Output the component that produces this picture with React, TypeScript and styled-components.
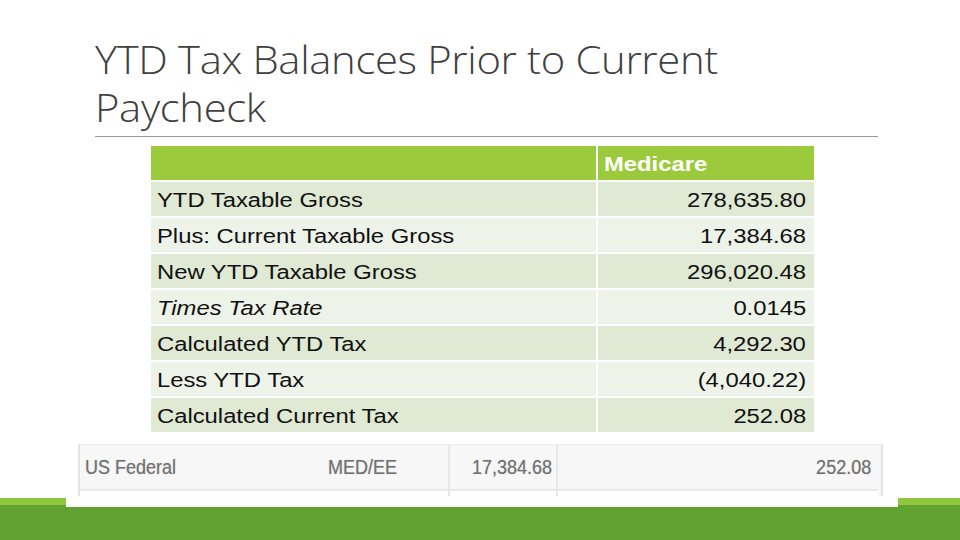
import React from "react";
import styled, { createGlobalStyle } from "styled-components";

const Global = createGlobalStyle`
  html, body { margin: 0; padding: 0; background: #ffffff; }
  #root { width: 960px; height: 540px; overflow: hidden; }
`;

const Slide = styled.div`
  width: 960px;
  height: 540px;
  display: flex;
  flex-direction: column;
  background: #ffffff;
  overflow: hidden;
`;

const Title = styled.h1`
  margin: 35px 0 0 95px;
  font-family: "Open Sans", "Liberation Sans", sans-serif;
  font-weight: 300;
  font-size: 38px;
  line-height: 48px;
  color: #404040;
  letter-spacing: -0.3px;
  transform: scaleX(1.1);
  transform-origin: left top;
`;

const Rule = styled.hr`
  margin: 5px 82px 0 95px;
  border: none;
  height: 1px;
  background: #9a9a9a;
`;

const Table = styled.div`
  margin: 9px 0 0 151px;
  width: 663px;
  display: grid;
  grid-template-columns: 445px 216px;
  grid-auto-rows: 34px;
  column-gap: 2px;
  row-gap: 2px;
`;

const Cell = styled.div<{ $tone: "head" | "dark" | "light"; $align?: "left" | "right" }>`
  background: ${(p) => (p.$tone === "head" ? "#9bcb3c" : p.$tone === "dark" ? "#dfe9d4" : "#eef3e9")};
  display: flex;
  align-items: center;
  justify-content: ${(p) => (p.$align === "right" ? "flex-end" : "flex-start")};
  padding: ${(p) => (p.$align === "right" ? "3px 8px 0 0" : "3px 0 0 6px")};
  box-sizing: border-box;
  font-family: "Liberation Sans", Arial, sans-serif;
  font-size: 20px;
  color: #111111;
  white-space: nowrap;
`;

const Txt = styled.span<{ $align?: "left" | "right"; $italic?: boolean; $bold?: boolean; $white?: boolean }>`
  display: inline-block;
  transform: scaleX(1.19);
  transform-origin: ${(p) => (p.$align === "right" ? "right" : "left")} center;
  font-style: ${(p) => (p.$italic ? "italic" : "normal")};
  font-weight: ${(p) => (p.$bold ? 700 : 400)};
  color: ${(p) => (p.$white ? "#ffffff" : "inherit")};
`;

const Shot = styled.div`
  position: relative;
  z-index: 1;
  margin: 5px 62px -33px 66px;
  height: 70px;
  background: #ffffff;
  padding: 7px 0 0 12px;
  box-sizing: border-box;
`;

const ShotGrid = styled.div`
  width: 801px;
  display: grid;
  grid-template-columns: 232px 136px 108px 321px;
  grid-template-rows: 46px 5px;
  border-left: 2px solid #e3e3e3;
  border-right: 2px solid #e3e3e3;
  border-top: 1px solid #ececec;
  background: #f7f7f7;
`;

const ShotCell = styled.div<{ $align?: "left" | "right"; $divider?: boolean; $pad?: number }>`
  display: flex;
  align-items: center;
  justify-content: ${(p) => (p.$align === "right" ? "flex-end" : "flex-start")};
  padding: ${(p) => (p.$align === "right" ? `0 ${p.$pad ?? 5}px 0 0` : `0 0 0 ${p.$pad ?? 5}px`)};
  border-left: ${(p) => (p.$divider ? "2px solid #e6e6e6" : "none")};
  border-bottom: 2px solid #e8e8e8;
  font-family: "Liberation Sans", Arial, sans-serif;
  font-size: 20px;
  color: #727272;
  white-space: nowrap;
`;

const ShotTail = styled.div<{ $divider?: boolean }>`
  border-left: ${(p) => (p.$divider ? "2px solid #e6e6e6" : "none")};
  background: #ffffff;
`;

const Narrow = styled.span<{ $align?: "left" | "right" }>`
  display: inline-block;
  transform: scaleX(0.9);
  transform-origin: ${(p) => (p.$align === "right" ? "right" : "left")} center;
  text-shadow: 0 0 1px rgba(110, 110, 110, 0.5);
`;

const Footer = styled.div`
  margin-top: auto;
  height: 42px;
  display: flex;
  flex-direction: column;
`;

const FooterLight = styled.div`
  height: 7px;
  background: #8fc73e;
`;

const FooterDark = styled.div`
  flex: 1;
  background: #62a233;
`;

type Row = { label: string; value: string; italic?: boolean };

const rows: Row[] = [
  { label: "YTD Taxable Gross", value: "278,635.80" },
  { label: "Plus: Current Taxable Gross", value: "17,384.68" },
  { label: "New YTD Taxable Gross", value: "296,020.48" },
  { label: "Times Tax Rate", value: "0.0145", italic: true },
  { label: "Calculated YTD Tax", value: "4,292.30" },
  { label: "Less YTD Tax", value: "(4,040.22)" },
  { label: "Calculated Current Tax", value: "252.08" },
];

export default function App() {
  return (
    <>
      <Global />
      <Slide>
        <Title>
          YTD Tax Balances Prior to Current
          <br />
          Paycheck
        </Title>
        <Rule />
        <Table>
          <Cell $tone="head" />
          <Cell $tone="head" $align="left">
            <Txt $bold $white>Medicare</Txt>
          </Cell>
          {rows.map((r, i) => {
            const tone = i % 2 === 0 ? "dark" : "light";
            return (
              <React.Fragment key={r.label}>
                <Cell $tone={tone}>
                  <Txt $italic={r.italic}>{r.label}</Txt>
                </Cell>
                <Cell $tone={tone} $align="right">
                  <Txt $align="right">{r.value}</Txt>
                </Cell>
              </React.Fragment>
            );
          })}
        </Table>
        <Shot>
          <ShotGrid>
            <ShotCell $pad={5}>
              <Narrow>US Federal</Narrow>
            </ShotCell>
            <ShotCell $pad={16}>
              <Narrow>MED/EE</Narrow>
            </ShotCell>
            <ShotCell $divider $align="right" $pad={4}>
              <Narrow $align="right">17,384.68</Narrow>
            </ShotCell>
            <ShotCell $divider $align="right" $pad={6}>
              <Narrow $align="right">252.08</Narrow>
            </ShotCell>
            <ShotTail />
            <ShotTail />
            <ShotTail $divider />
            <ShotTail $divider />
          </ShotGrid>
        </Shot>
        <Footer>
          <FooterLight />
          <FooterDark />
        </Footer>
      </Slide>
    </>
  );
}
